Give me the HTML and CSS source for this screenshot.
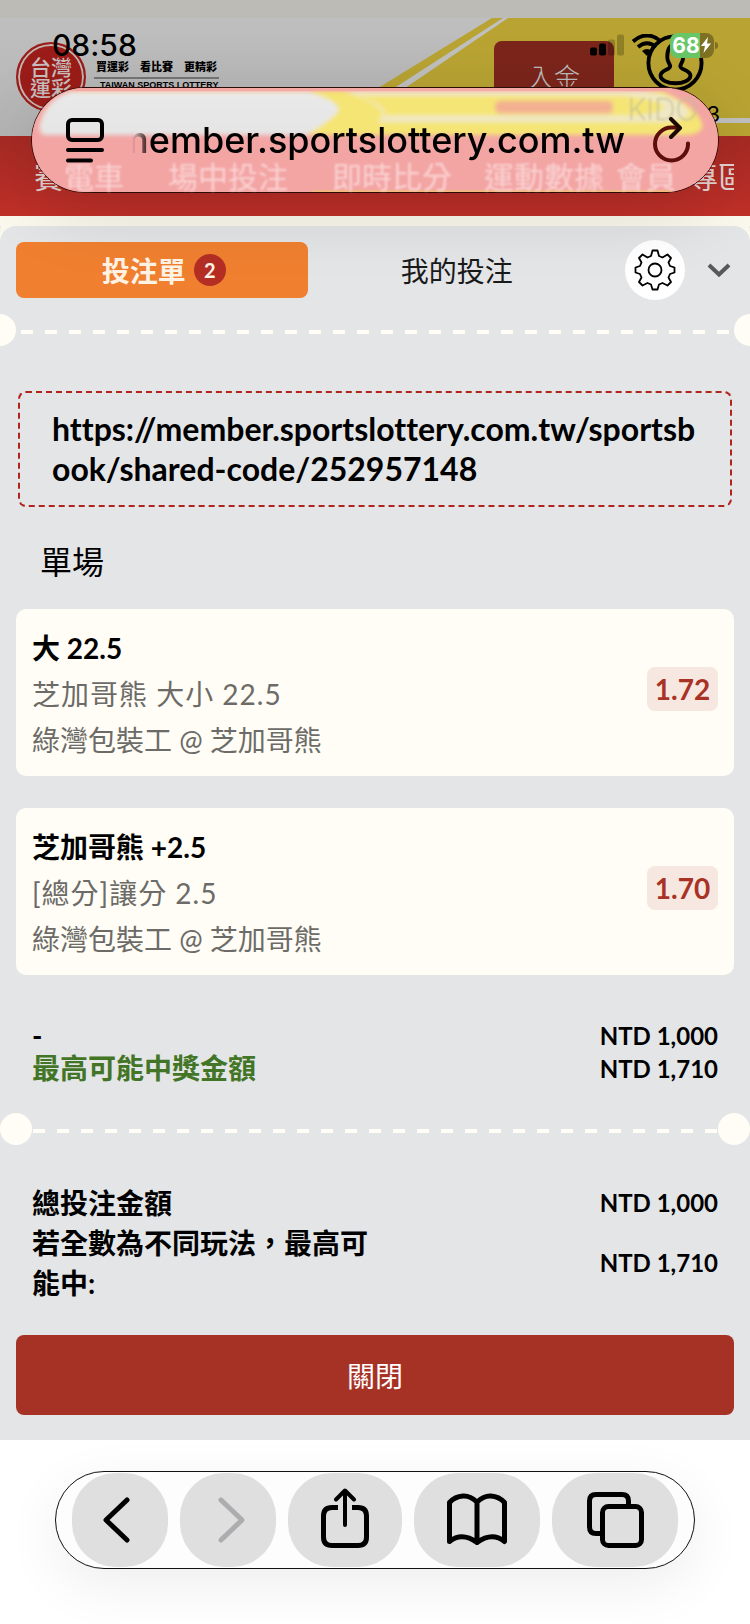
FILE: index.html
```html
<!DOCTYPE html>
<html lang="zh-Hant">
<head>
<meta charset="utf-8">
<meta name="viewport" content="width=device-width, initial-scale=1">
<title>台灣運彩</title>
<link rel="stylesheet" href="styles.css">
</head>
<body>
<div class="page">
  <header class="site-header">
    <div class="top-strip"></div>
    <div class="banner">
      <svg class="banner-art" viewBox="0 0 750 118" preserveAspectRatio="none" aria-hidden="true">
        <path d="M492 0H750V118H300Z" fill="#b9a433"/>
        <path d="M503 0H508L361 100H750V105H340Z" fill="#c0c0c0"/>
      </svg>
      <div class="brand">
        <div class="seal"><span>台灣</span><span>運彩</span></div>
        <div class="slogan">
          <p class="slogan-zh"><span>買運彩</span><span>看比賽</span><span>更精彩</span></p>
          <p class="slogan-en">TAIWAN SPORTS LOTTERY</p>
        </div>
      </div>
      <div class="account">
        <button class="deposit" type="button">入金</button>
        <div class="user">
          <svg class="avatar" viewBox="0 0 60 60" aria-hidden="true" fill="none" stroke="#000" stroke-width="4">
            <circle cx="30" cy="30" r="27.500"/>
            <path d="M22 24c0 4 2.500 7 3 9 .5 4-10 4-10 10 0 5 8 8 15.500 8s15.500-3 15.500-8c0-6-11-6-10.500-10 .5-2 3-5 3-9 0-8-3-13-8.500-13S22 16 22 24Z"/>
          </svg>
          <span class="user-tail">3</span>
        </div>
      </div>
    </div>
    <nav class="site-nav">
      <ul>
        <li>賽</li>
        <li class="under-glass">電車</li>
        <li class="under-glass gap-l">場中投注</li>
        <li class="under-glass gap-l">即時比分</li>
        <li class="under-glass gap-m">運動數據</li>
        <li class="under-glass gap-s">會員</li>
        <li class="gap-s">專區</li>
      </ul>
    </nav>

    <div class="status-bar">
      <span class="clock">08:58</span>
      <div class="status-icons">
        <svg class="signal" viewBox="0 0 34 22" aria-hidden="true">
          <rect x="0" y="13.500" width="7" height="8" rx="2"/>
          <rect x="9" y="9.500" width="7" height="12" rx="2"/>
          <rect x="18" y="5.500" width="7" height="16" rx="2" opacity=".22"/>
          <rect x="27" y="0.500" width="7" height="21" rx="2" opacity=".22"/>
        </svg>
        <svg class="wifi" viewBox="0 0 30 22" aria-hidden="true" fill="none" stroke="#000" stroke-width="4">
          <path d="M1 7.500Q15-4.500 29 7.500M6 13Q15 5.500 24 13"/>
          <path d="M15 22l-5-5q5-4 10 0Z" fill="#000" stroke="none"/>
        </svg>
        <div class="battery">
          <span>68</span>
          <svg viewBox="0 0 12 16" aria-hidden="true"><path d="M8 0L1 9h4L3.500 16 11 6.500H7Z" fill="#fff"/></svg>
        </div>
      </div>
    </div>

    <div class="address-bar">
      <svg class="glass" viewBox="0 0 686 106" preserveAspectRatio="none" aria-hidden="true">
        <defs>
          <filter id="soft" x="-5%" y="-20%" width="110%" height="140%"><feGaussianBlur stdDeviation="2"/></filter>
          <linearGradient id="grey" x1="0" y1="0" x2="0" y2="1">
            <stop offset="0" stop-color="#e9e9e9"/><stop offset="1" stop-color="#e5e5e5"/>
          </linearGradient>
        </defs>
        <rect width="686" height="106" fill="#f3a5a4"/>
        <g filter="url(#soft)">
          <path d="M40 3H630Q664 18 670 36 672 48 650 48H14Q6 48 8 36 14 12 40 3Z" fill="#f5e574"/>
          <path d="M38 4H276Q310 14 306 24 298 34 274 48H14Q6 48 8 36 16 10 38 4Z" fill="url(#grey)"/>
          <path d="M312 3H610Q650 8 658 26 650 36 620 35H344Q366 22 312 3Z" fill="#f0e8c4"/>
          <path d="M326 8H590Q628 12 632 19 626 28 600 28H352Q356 18 326 8Z" fill="#f5e574"/>
          <rect x="463" y="13" width="118" height="13" rx="5" fill="#f3b091"/>
        </g>
        <path d="M40 1.500H640" stroke="#f6a9a4" stroke-width="3"/>
        <path d="M280 105H640" stroke="#f0c95c"/>
      </svg>
      <span class="ghost-name" aria-hidden="true">KIDO</span>
      <button class="bar-button" type="button" aria-label="頁面選單">
        <svg class="reader-icon" viewBox="0 0 38 46" aria-hidden="true" fill="none" stroke="#000" stroke-width="4" stroke-linecap="round">
          <rect x="2" y="3" width="34" height="20" rx="4"/>
          <path d="M2 33H36M2 43.500H25"/>
        </svg>
      </button>
      <button class="address" type="button"><span>member.sportslottery.com.tw</span></button>
      <button class="bar-button" type="button" aria-label="重新載入">
        <svg class="reload-icon" viewBox="0 0 38 46" aria-hidden="true" fill="none" stroke="#3a0c08" stroke-width="4" stroke-linecap="round" stroke-linejoin="round">
          <path d="M35 26.500A16.500 16.500 0 1 1 19 10.500H26" stroke="#5a0f0a"/>
          <path d="M18 2L27 11 18 20" stroke="#1c0a04"/>
        </svg>
      </button>
    </div>
  </header>

  <main class="slip">
    <div class="tabs">
      <button class="tab tab-active" type="button">投注單<span class="count">2</span></button>
      <button class="tab" type="button">我的投注</button>
      <button class="gear" type="button" aria-label="設定">
        <svg viewBox="0 0 42 42" aria-hidden="true" fill="none" stroke="#000" stroke-width="1.800" stroke-linejoin="round">
          <path d="M18.500 1.500h5l1.500 5.500 3.500 1.500L33.500 5.500 37 9l-2.500 4.500L36 17l4.500 1.500v5L36 25l-1.500 3.500L37 33l-3.500 3.500-5-2.500L25 35.500 23.500 40.500h-5L17 35.500 13.500 34l-5 2.500L5 33l2.500-4.500L6 25l-4.500-1.500v-5L6 17l1.500-3.500L5 9l3.500-3.500 5 3L17 7Z"/>
          <circle cx="21" cy="21" r="6.500"/>
        </svg>
      </button>
      <button class="fold" type="button" aria-label="收合">
        <svg viewBox="0 0 24 14" aria-hidden="true" fill="none" stroke="#58585a" stroke-width="4"><path d="M2 2L12 11.500 22 2"/></svg>
      </button>
    </div>

    <div class="tear tear-edge"></div>

    <a class="share-link" href="https://member.sportslottery.com.tw/sportsbook/shared-code/252957148">https://member.sportslottery.com.tw/sportsbook/shared-code/252957148</a>

    <h2 class="section-title">單場</h2>

    <section class="bets">
      <article class="bet">
        <div class="bet-info">
          <h3>大 22.5</h3>
          <p class="market">芝加哥熊 大小 22.5</p>
          <p>綠灣包裝工 @ 芝加哥熊</p>
        </div>
        <span class="odds">1.72</span>
      </article>
      <article class="bet">
        <div class="bet-info">
          <h3>芝加哥熊 +2.5</h3>
          <p class="market">[總分]讓分 2.5</p>
          <p>綠灣包裝工 @ 芝加哥熊</p>
        </div>
        <span class="odds">1.70</span>
      </article>
    </section>

    <dl class="summary">
      <div><dt>-</dt><dd>NTD 1,000</dd></div>
      <div><dt class="win">最高可能中獎金額</dt><dd>NTD 1,710</dd></div>
    </dl>

    <div class="tear"></div>

    <dl class="totals">
      <div><dt>總投注金額</dt><dd>NTD 1,000</dd></div>
      <div><dt>若全數為不同玩法，最高可能中:</dt><dd>NTD 1,710</dd></div>
    </dl>

    <button class="close" type="button">關閉</button>
  </main>

  <footer class="browser-footer">
    <div class="toolbar">
      <button class="tool" type="button" aria-label="上一頁">
        <svg viewBox="0 0 60 60" aria-hidden="true"><path d="M37 10L16 30 37 50"/></svg>
      </button>
      <button class="tool tool-off" type="button" aria-label="下一頁" disabled>
        <svg viewBox="0 0 60 60" aria-hidden="true"><path d="M23 10L44 30 23 50"/></svg>
      </button>
      <button class="tool tool-wide" type="button" aria-label="分享">
        <svg viewBox="0 0 60 60" aria-hidden="true"><path d="M23 17.500H17Q8.500 17.500 8.500 26V47Q8.500 55.500 17 55.500H43Q51.500 55.500 51.500 47V26Q51.500 17.500 43 17.500H37" stroke-linecap="butt"/><path d="M30 35V1M21 9.500L30 .5 39 9.500" stroke-width="4"/></svg>
      </button>
      <button class="tool tool-wider" type="button" aria-label="書籤">
        <svg viewBox="0 0 60 60" aria-hidden="true"><path d="M30 52.500V12Q23 5.500 16 6 8 6.500 2.500 12.500V51.500Q15 41.500 30 52.500 45 41.500 57.500 51.500V12.500Q52 6.500 44 6 37 5.500 30 12"/></svg>
      </button>
      <button class="tool tool-wider" type="button" aria-label="分頁">
        <svg viewBox="0 0 60 60" aria-hidden="true"><rect x="17.500" y="16.500" width="39" height="39" rx="6"/><path d="M43.500 16V11Q43.500 4.500 37 4.500H11Q4.500 4.500 4.500 11V37Q4.500 43.500 11 43.500H17"/></svg>
      </button>
    </div>
  </footer>
</div>
</body>
</html>
```

FILE: styles.css
```css
* { box-sizing: border-box; }

body {
  margin: 0;
  background: #fff;
  color: #000;
  font-family: Lato, "Noto Sans CJK TC", sans-serif;
  font-variant-ligatures: none;
}

h2, h3, p, ul, dl, dd { margin: 0; padding: 0; }

button {
  margin: 0;
  padding: 0;
  border: 0;
  background: none;
  color: inherit;
  font: inherit;
}

.page {
  display: flex;
  flex-direction: column;
  min-height: 100vh;
  background: #e4e5e7;
}

/* Site header */
.site-header {
  position: relative;
  z-index: 1;
  padding-bottom: 10px;
}

.top-strip { height: 18px; background: #bcbbb5; }

.banner {
  position: relative;
  display: flex;
  justify-content: space-between;
  height: 118px;
  padding: 0 16px;
  background: linear-gradient(#bfbfbf, #b4b4b4);
}

.banner-art {
  position: absolute;
  inset: 0;
  width: 100%;
  height: 100%;
}

.brand, .account { position: relative; display: flex; }
.brand { gap: 8px; padding-top: 24px; }

.seal {
  display: flex;
  flex-direction: column;
  align-items: center;
  justify-content: center;
  width: 70px;
  height: 70px;
  border: 2px solid #9b1c18;
  border-radius: 50%;
  background: #9b1c18;
  box-shadow: inset 0 0 0 2px #c4b4b2;
  color: #c8bebe;
  font-size: 21px;
  font-weight: 500;
  line-height: 21px;
}

.slogan { padding-top: 16px; }

.slogan-zh {
  display: flex;
  justify-content: space-between;
  gap: 11px;
  padding: 0 2px 1px;
  border-bottom: 2px solid #767676;
  font-size: 11px;
  font-weight: 900;
  line-height: 18px;
}

.slogan-en {
  padding-left: 6px;
  font-family: "Liberation Sans", sans-serif;
  font-size: 9px;
  font-weight: 700;
  line-height: 12px;
}

.account { gap: 31px; }

.deposit {
  align-self: flex-start;
  width: 120px;
  height: 68px;
  margin-top: 23px;
  border-radius: 8px;
  background: #7c251b;
  color: #bdbdbd;
  font-size: 26px;
  font-weight: 300;
}

.user {
  display: flex;
  flex-direction: column;
  width: 89px;
  padding-top: 16px;
}

.avatar { width: 60px; height: 60px; }

.user-tail {
  align-self: flex-end;
  padding-right: 14px;
  font-family: Inter, sans-serif;
  font-size: 22px;
  line-height: 44px;
}

.site-nav {
  padding: 0 16px 0 34px;
  background: linear-gradient(#a62a24, #c03028);
}

.site-nav ul {
  display: flex;
  overflow: hidden;
  color: #e4d3d2;
  font-size: 30px;
  line-height: 80px;
  white-space: nowrap;
  list-style: none;
}

.site-nav li { flex: none; }

.site-nav .under-glass {
  position: relative;
  z-index: 3;
  color: #fad2d2;
  filter: blur(1px);
}

.gap-l { margin-left: 44px; }
.gap-m { margin-left: 32px; }
.gap-s { margin-left: 12px; }

/* Phone status bar, floating over the site */
.status-bar {
  position: absolute;
  inset: 28px 32px auto 52px;
  display: flex;
  align-items: center;
  justify-content: space-between;
  height: 34px;
}

.clock {
  font-family: Inter, sans-serif;
  font-size: 30px;
  font-weight: 500;
}

.status-icons { display: flex; align-items: center; gap: 8px; }
.signal { width: 34px; height: 22px; }
.wifi { width: 30px; height: 22px; }

.battery {
  position: relative;
  display: flex;
  align-items: center;
  justify-content: center;
  width: 44px;
  height: 25px;
  margin-right: 4px;
  border-radius: 8px;
  background: linear-gradient(90deg, #68c667 68%, #7f7124 68%);
  color: #fff;
  font-family: Inter, sans-serif;
  font-size: 21px;
  font-weight: 700;
}

.battery svg { width: 12px; height: 16px; }

.battery::after {
  content: "";
  position: absolute;
  top: 9px;
  right: -4px;
  width: 3px;
  height: 7px;
  border-radius: 0 3px 3px 0;
  background: #7f7124;
}

/* Floating address bar */
.address-bar {
  position: absolute;
  inset: 87px 31px auto;
  z-index: 2;
  display: flex;
  align-items: center;
  height: 106px;
  padding: 0 27px 0 34px;
  border: 1px solid #2b0d08;
  border-radius: 53px;
  box-shadow: 0 16px 72px rgba(0, 0, 0, .14);
}

.glass {
  position: absolute;
  inset: 0;
  width: 100%;
  height: 100%;
  border-radius: 52px;
}

.ghost-name {
  position: absolute;
  top: 2px;
  right: 20px;
  color: #c4bf9a;
  font-family: Inter, sans-serif;
  font-size: 30px;
  font-weight: 200;
  line-height: 38px;
  filter: blur(1px);
}

.bar-button { position: relative; display: flex; flex: none; }
.reader-icon, .reload-icon { width: 38px; height: 46px; }

.address {
  position: relative;
  display: flex;
  flex: 1;
  justify-content: flex-end;
  min-width: 0;
  margin: 0 28px;
  overflow: hidden;
  font-family: Inter, sans-serif;
  font-size: 36px;
  font-weight: 500;
  line-height: 56px;
  -webkit-mask-image: linear-gradient(90deg, transparent, #000 20px);
  mask-image: linear-gradient(90deg, transparent, #000 20px);
}

/* Bet slip */
.slip {
  display: flex;
  flex-direction: column;
  margin-top: -10px;
  padding-bottom: 25px;
  border-top: 10px solid #fbf9ee;
  background: #e4e5e7;
}

.tabs {
  display: flex;
  align-items: center;
  padding: 14px 19px 0 16px;
  border-radius: 16px 16px 0 0;
  background: #e4e5e7;
  box-shadow: 0 -10px 0 #fbf9ee;
}

.tab {
  flex: 289;
  height: 56px;
  border-radius: 8px;
  color: #1a1a1a;
  font-size: 28px;
}

.tab + .tab { flex: 300; }

.tab-active {
  display: flex;
  align-items: center;
  justify-content: center;
  gap: 8px;
  padding-left: 4px;
  background: #f08030;
  color: #fff3e6;
  font-weight: 700;
}

.count {
  width: 32px;
  height: 32px;
  border-radius: 50%;
  background: #b42e24;
  font-size: 20px;
  line-height: 32px;
}

.gear {
  display: flex;
  align-items: center;
  justify-content: center;
  width: 60px;
  height: 60px;
  margin: 0 22px 0 19px;
  border-radius: 50%;
  background: #fff;
}

.gear svg { width: 42px; height: 42px; }
.fold svg { display: block; width: 24px; height: 14px; }

.tear {
  display: flex;
  align-items: center;
  justify-content: space-between;
  height: 32px;
  background: repeating-linear-gradient(90deg, #fffdf5 0 12px, transparent 12px 24px) 33px 16px / calc(100% - 66px) 4px no-repeat;
}

.tear::before, .tear::after {
  content: "";
  width: 32px;
  height: 32px;
  border-radius: 50%;
  background: #fffdf5;
}

.tear-edge {
  margin-top: 14px;
  background-position: 21px 16px;
  background-size: calc(100% - 42px) 4px;
}

.tear-edge::before { width: 16px; border-radius: 0 16px 16px 0; }
.tear-edge::after { width: 16px; border-radius: 16px 0 0 16px; }

.share-link {
  margin: 45px 18px 0;
  padding: 16px 32px;
  border: 2px dashed #b0241e;
  border-radius: 8px;
  color: #000;
  font-size: 32px;
  font-weight: 700;
  line-height: 40px;
  text-decoration: none;
  word-break: break-all;
}

.section-title {
  padding: 32px 40px 24px;
  font-size: 32px;
  font-weight: 400;
  line-height: 46px;
}

.bets {
  display: flex;
  flex-direction: column;
  gap: 32px;
  padding: 0 16px;
}

.bet {
  display: flex;
  justify-content: space-between;
  align-items: flex-start;
  padding: 16px 16px 13px;
  border-radius: 10px;
  background: #fffdf5;
}

.bet-info {
  color: #6c6b68;
  font-size: 28px;
  line-height: 46px;
}

.bet h3 { color: #000; font-size: 28px; font-weight: 700; }
.market { letter-spacing: 1px; }

.odds {
  width: 71px;
  margin-top: 42px;
  border-radius: 8px;
  background: #f6e8e0;
  color: #a93226;
  font-size: 28px;
  font-weight: 700;
  line-height: 44px;
  text-align: center;
}

.summary, .totals { padding: 0 32px; }

.summary div, .totals div {
  display: flex;
  align-items: center;
  justify-content: space-between;
}

.summary dt, .totals dt {
  width: 50%;
  font-size: 28px;
  font-weight: 700;
}

.summary dd, .totals dd {
  font-size: 24px;
  font-weight: 700;
}

.summary { padding-top: 44px; padding-bottom: 28px; line-height: 33px; }
.summary .win { color: #437527; }

.totals { padding-top: 38px; padding-bottom: 32px; line-height: 40px; }

.close {
  height: 80px;
  margin: 0 16px;
  border-radius: 8px;
  background: #a63226;
  color: #fff;
  font-size: 28px;
  font-weight: 400;
}

/* Browser toolbar */
.browser-footer {
  flex: 1;
  padding: 31px 55px 56px;
  background: #fff;
}

.toolbar {
  display: flex;
  gap: 12px;
  height: 98px;
  padding: 1px 16px;
  border: 1px solid #111;
  border-radius: 49px;
  background: #fdfdfd;
  box-shadow: 0 16px 56px rgba(0, 0, 0, .07);
}

.tool {
  display: flex;
  flex: 96;
  align-items: center;
  justify-content: center;
  border-radius: 44px;
  background: #dfdfdf;
}

.tool-wide { flex: 114; }
.tool-wider { flex: 126; }

.tool svg {
  width: 60px;
  height: 60px;
  overflow: visible;
  fill: none;
  stroke: #000;
  stroke-width: 5;
  stroke-linecap: round;
  stroke-linejoin: round;
}

.tool-off svg { stroke: #adadaf; }
```
